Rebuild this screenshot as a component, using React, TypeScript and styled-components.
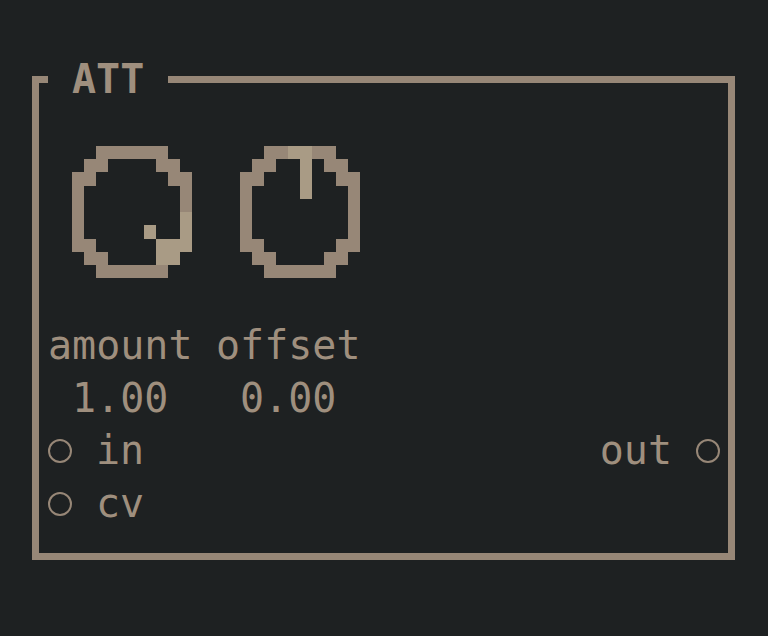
import React from 'react';
import styled, { createGlobalStyle } from 'styled-components';

const CELL_W = 24;
const CELL_H = 53;

const colors = {
  bg: '#1e2122',
  line: '#978777',
  text: '#9f8f7e',
  accent: '#a99b85',
};

const GlobalStyle = createGlobalStyle`
  html, body {
    margin: 0;
    background: ${colors.bg};
  }
  body {
    width: 768px;
    height: 636px;
    overflow: hidden;
    font-family: "DejaVu Sans Mono", "Liberation Mono", monospace;
    font-size: 40px;
    line-height: ${CELL_H}px;
    color: ${colors.text};
  }
`;

const Screen = styled.div`
  padding: ${CELL_H}px 0 0 32px;
`;

const Module = styled.fieldset`
  box-sizing: border-box;
  width: 703px;
  margin: 0;
  padding: 0 8px 23px 9px;
  border: 7px solid ${colors.line};
  min-inline-size: 0;
`;

const Title = styled.legend`
  padding: 0 ${CELL_W}px;
  margin: 0;
  height: ${CELL_H}px;
  line-height: ${CELL_H}px;
  font-weight: bold;
  color: ${colors.text};
`;

const Controls = styled.div`
  display: flex;
  gap: ${CELL_W}px;
`;

const Control = styled.div`
  display: flex;
  flex-direction: column;
  width: ${CELL_W * 6}px;
`;

const KnobBox = styled.svg`
  display: block;
  margin-left: ${CELL_W}px;
  width: ${CELL_W * 5}px;
  height: ${CELL_H * 4}px;
`;

const Label = styled.div`
  box-sizing: border-box;
  height: ${CELL_H}px;
  padding-top: 1px;
  white-space: pre;
`;

const Value = styled(Label)`
  padding-left: ${CELL_W}px;
`;

const Ports = styled.div`
  display: flex;
  justify-content: space-between;
`;

const PortColumn = styled.div`
  display: flex;
  flex-direction: column;
`;

const Port = styled.div`
  display: flex;
  align-items: center;
  gap: ${CELL_W}px;
  height: ${CELL_H}px;
`;

const Jack = styled.span`
  box-sizing: border-box;
  width: 24px;
  height: 24px;
  border: 2px solid ${colors.line};
  border-radius: 50%;
`;

// 10x10 pixel knobs, '#' ring, '*' indicator
const KNOB_FULL = [
  '..######..',
  '.##....##.',
  '##......##',
  '#........#',
  '#........#',
  '#........*',
  '#.....*..*',
  '##.....***',
  '.##....**.',
  '..######..',
];

const KNOB_ZERO = [
  '..##**##..',
  '.##..*.##.',
  '##...*..##',
  '#....*...#',
  '#........#',
  '#........#',
  '#........#',
  '##......##',
  '.##....##.',
  '..######..',
];

const Knob = ({ pixels }: { pixels: string[] }) => (
  <KnobBox viewBox="0 0 10 16" preserveAspectRatio="none" shapeRendering="crispEdges">
    {pixels.map((row, y) =>
      row.split('').map((c, x) =>
        c === '.' ? null : (
          <rect
            key={`${x}-${y}`}
            x={x}
            y={y + 3}
            width={1}
            height={1}
            fill={c === '*' ? colors.accent : colors.line}
          />
        )
      )
    )}
  </KnobBox>
);

const App = () => {
  return (
    <>
      <GlobalStyle />
      <Screen>
        <Module>
          <Title>ATT</Title>
          <Controls>
            <Control>
              <Knob pixels={KNOB_FULL} />
              <Label>amount</Label>
              <Value>1.00</Value>
            </Control>
            <Control>
              <Knob pixels={KNOB_ZERO} />
              <Label>offset</Label>
              <Value>0.00</Value>
            </Control>
          </Controls>
          <Ports>
            <PortColumn>
              <Port>
                <Jack />
                <span>in</span>
              </Port>
              <Port>
                <Jack />
                <span>cv</span>
              </Port>
            </PortColumn>
            <PortColumn>
              <Port>
                <span>out</span>
                <Jack />
              </Port>
            </PortColumn>
          </Ports>
        </Module>
      </Screen>
    </>
  );
};

export default App;
